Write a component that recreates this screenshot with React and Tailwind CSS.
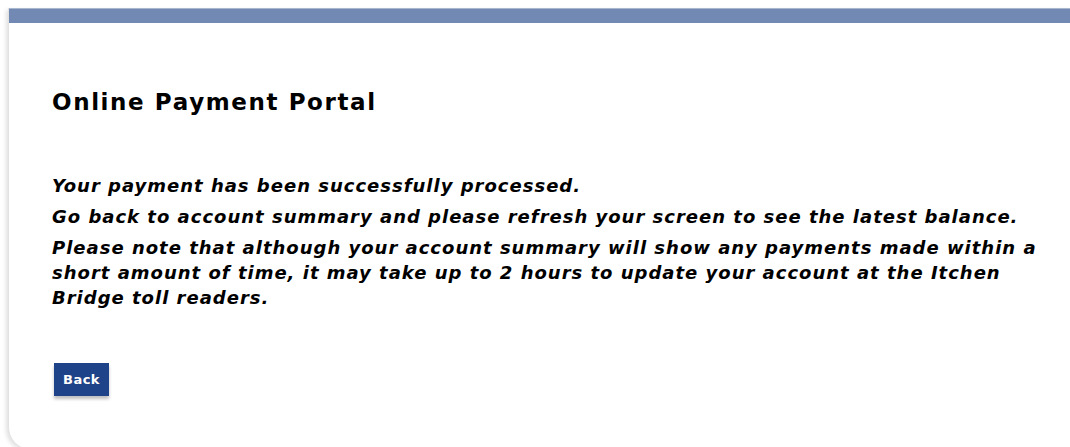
export default function App() {
  return (
    <div className="w-[1070px] h-[447px] bg-white overflow-hidden pl-[8px] pt-[8px]">
      <div
        className="h-[441px] bg-white rounded-bl-[22px] border-l border-[#e2e2e2] shadow-[-2px_2px_4px_rgba(0,0,0,0.12)]"
        style={{ fontFamily: '"DejaVu Sans", Verdana, sans-serif' }}
      >
        <div className="h-[15px] bg-[#7189b3] border-t border-[#a9b6d0]" />
        <div className="pl-[43px] pt-[64px]">
          <h1 className="text-[23px] tracking-[1.6px] font-bold text-black leading-[30px]">Online Payment Portal</h1>
          <div className="mt-[56px] text-[18px] tracking-[1px] font-bold italic text-black leading-[25px]">
            <p>Your payment has been successfully processed.</p>
            <p className="mt-[6px]">Go back to account summary and please refresh your screen to see the latest balance.</p>
            <p className="mt-[6px] w-[1015px]">
              Please note that although your account summary will show any payments made within a short amount of time, it may take up to 2 hours to update your account at the Itchen Bridge toll readers.
            </p>
          </div>
          <button className="mt-[53px] ml-[2px] w-[55px] h-[33px] bg-[#1f4388] text-white text-[13px] tracking-[0.5px] font-bold shadow-[0_3px_3px_rgba(0,0,0,0.25)]">
            Back
          </button>
        </div>
      </div>
    </div>
  );
}
